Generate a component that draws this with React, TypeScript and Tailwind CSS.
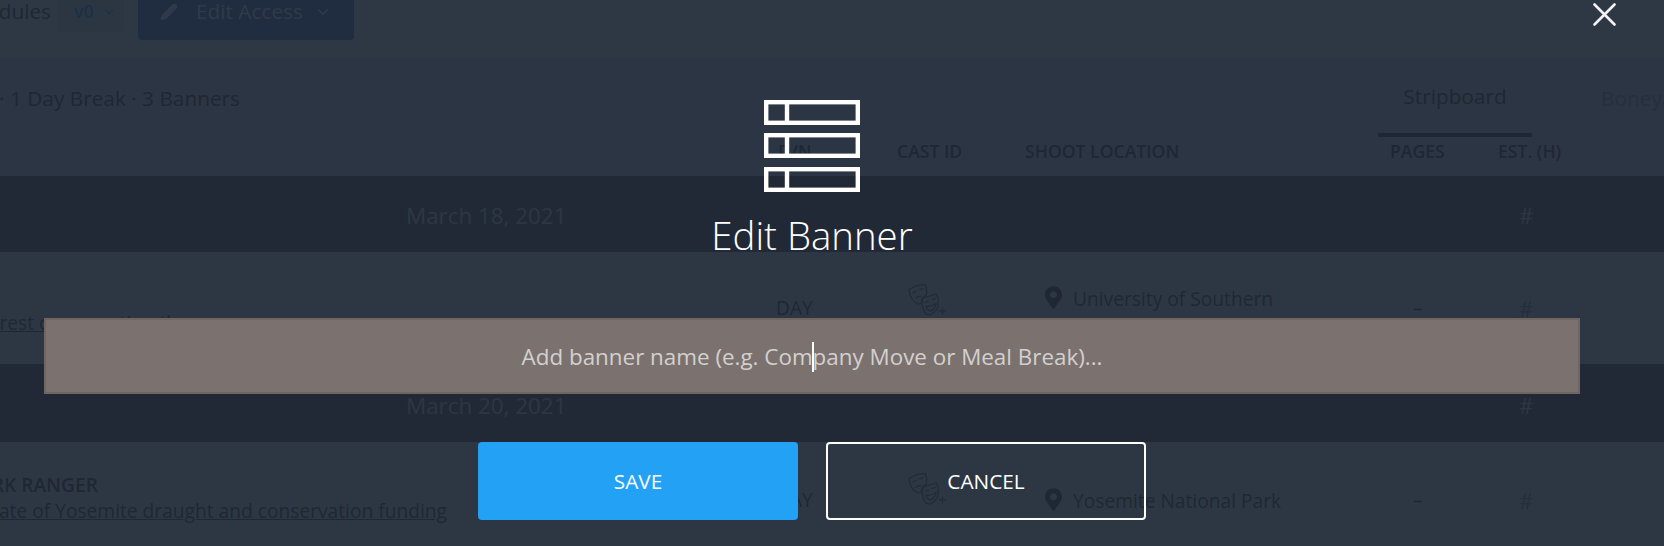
import React from 'react';
import { ChevronDown, Pencil } from 'lucide-react';
import { FaMapMarkerAlt } from 'react-icons/fa';

const font = { fontFamily: '"Open Sans", "Noto Sans", sans-serif' };

function Masks() {
    return (
        <svg width="39" height="33" viewBox="0 0 37 32" fill="none" stroke="#222b38" strokeWidth="1.2" strokeLinecap="round" strokeLinejoin="round">
            <path d="M1.5 6.5C6 3 12 1.5 17.5 1.5c1.5 4 1.5 7 1 10-3 1.5-4.5 4-5 7.5-1 1-2 1.5-3 1.5C5 18 2 12 1.5 6.5z" />
            <path d="M5.5 9.5l3-1.5M12 6.5l3-1M8 15c1-1.5 3-2 5-2" />
            <path d="M14 15.500c5-2.500 10-3.500 14-5 2.500 5 2.500 10 1 14-2 4-6 6.500-9 6.500-4-1-6-8-6-15.500z" />
            <path d="M17.500 18.500l3-1M24 16l3-1M18 22.500c3 .5 7-.5 10-3-1 4-3 7-6 7.500-2 0-3.500-2-4-4.500z" />
            <path d="M34 24v6M31 27h6" />
        </svg>
    );
}

function Row({ dn, location, top, maskClass, locClass, children }: { dn: string; location: string; top: string; maskClass: string; locClass: string; children: React.ReactNode }) {
    return (
        <div className={`flex items-center bg-[#2d3743] text-[19.2px] leading-[26px] text-[#1f2734] ${top}`}>
            <div className="w-[776px] shrink-0">{children}</div>
            <div className="w-[131px] shrink-0">{dn}</div>
            <div className={`w-[138px] shrink-0 ${maskClass}`}>
                <Masks />
            </div>
            <div className={`flex items-center w-[368px] shrink-0 ${locClass}`}>
                <FaMapMarkerAlt className="w-[17px] h-[25px] mr-[11px] -mt-[3px]" />
                {location}
            </div>
            <div className="w-[106px] shrink-0">–</div>
            <div className="text-[22px] text-[#252e3b]">#</div>
        </div>
    );
}

function DateRow({ label, top }: { label: string; top: string }) {
    return (
        <div className={`flex items-center bg-[#222936] text-[22.4px] text-[#2d3743] ${top}`}>
            <div className="w-[1519px] shrink-0 pl-[406px]">{label}</div>
            <div className="text-[22px]">#</div>
        </div>
    );
}

function BannerIcon() {
    return (
        <svg width="96" height="92" viewBox="0 0 96 92" fill="none" stroke="#fff" strokeWidth="4.4">
            {[0, 33, 67].map((y) => (
                <g key={y} transform={`translate(0 ${y})`}>
                    <rect x="2.2" y="2.2" width="91.6" height="20.6" />
                    <path d="M23 2v21" />
                </g>
            ))}
        </svg>
    );
}

export default function App() {
    return (
        <div className="relative h-[546px] w-[1664px] overflow-hidden bg-[#2d3743]" style={font}>
            {/* dimmed page behind the dialog */}
            <div className="flex items-start h-[58px] bg-[#2e3844] text-[20.8px] text-[#1f2734]">
                <div className="flex justify-end w-[51px] shrink-0 whitespace-nowrap leading-[22px]">Schedules</div>
                <div className="flex items-center gap-[9px] w-[66px] h-[32px] ml-[7px] pl-[16px] pb-[8px] rounded-b bg-[#2c3642] text-[17.6px] text-[#1b3048] font-semibold leading-none">
                    v0
                    <ChevronDown className="w-[14px] h-[14px]" />
                </div>
                <div className="flex items-center w-[216px] h-[40px] ml-[14px] pl-[22px] pb-[16px] rounded-b bg-[#202d40] text-[#2f3b4b]">
                    <Pencil className="w-[18px] h-[18px] mr-[18px] fill-[#2f3b4b]" />
                    Edit Access
                    <ChevronDown className="w-[18px] h-[18px] ml-[11px]" />
                </div>
            </div>

            <div className="h-[118px] bg-[#2c3544] text-[#1f2734]">
                <div className="flex items-start h-[76px] text-[20.8px] pt-[25px]">
                    <div className="flex justify-end w-[240px] shrink-0 whitespace-nowrap">
                        3 Shoot Days · 1 Day Break · 3 Banners
                    </div>
                    <div className="w-[1138px] shrink-0" />
                    <div className="w-[154px] shrink-0 h-[56px] -mt-[2px] border-b-4 border-[#1f2734] text-center">Stripboard</div>
                    <div className="ml-[69px] whitespace-nowrap text-[#262f3d]">Boneyard</div>
                </div>
                <div className="flex items-center h-[42px] pb-[8px] text-[17.6px] font-semibold whitespace-nowrap">
                    <div className="w-[778px] shrink-0" />
                    <div className="w-[119px] shrink-0">D/N</div>
                    <div className="w-[128px] shrink-0">CAST ID</div>
                    <div className="w-[365px] shrink-0">SHOOT LOCATION</div>
                    <div className="w-[108px] shrink-0">PAGES</div>
                    <div>EST. (H)</div>
                </div>
            </div>

            <DateRow label="March 18, 2021" top="h-[76px] pt-[3px]" />
            <Row dn="DAY" location="University of Southern" top="h-[112px]" maskClass="-mt-[17px]" locClass="-mt-[18px]">
                <div className="-ml-[22px] mt-[30px] underline whitespace-nowrap">Forest conservation th</div>
            </Row>
            <DateRow label="March 20, 2021" top="h-[78px] pt-[5px]" />
            <Row dn="DAY" location="Yosemite National Park" top="h-[116px]" maskClass="-mt-[23px]" locClass="mt-[1px]">
                <div className="flex justify-end w-[98px] font-semibold whitespace-nowrap -mt-[5px]">PARK RANGER</div>
                <div className="flex justify-end w-[447px] underline whitespace-nowrap">
                    Update on state of Yosemite draught and conservation funding
                </div>
            </Row>

            {/* dialog */}
            <div className="absolute inset-0 flex flex-col items-center w-[1536px] ml-[44px] pt-[100px]">
                <BannerIcon />
                <h2 className="mt-[18px] text-[38.4px] leading-[50px] font-light text-white">Edit Banner</h2>
                <div className="relative w-full mt-[58px]">
                    <input
                        readOnly
                        placeholder="Add banner name (e.g. Company Move or Meal Break)..."
                        className="block w-full h-[76px] border-2 border-[#6f6664] bg-[#7b7270] text-center text-[22.4px] outline-none placeholder:text-[#d3d0ce]"
                    />
                    <span className="absolute left-1/2 top-[24px] w-[2px] h-[30px] bg-white" />
                </div>
                <div className="flex gap-[28px] mt-[48px]">
                    <button className="w-[320px] h-[78px] pt-[2px] rounded bg-[#23a1f5] text-[20.8px] text-white">SAVE</button>
                    <button className="w-[320px] h-[78px] pt-[2px] rounded border-2 border-white text-[20.8px] text-white">CANCEL</button>
                </div>
            </div>

            <button className="absolute top-[3px] left-[1593px]">
                <svg width="23" height="23" viewBox="0 0 23 23" stroke="#f2f2f2" strokeWidth="2.6" strokeLinecap="round">
                    <path d="M1.500 1.500l20 20M21.500 1.500l-20 20" />
                </svg>
            </button>
        </div>
    );
}
